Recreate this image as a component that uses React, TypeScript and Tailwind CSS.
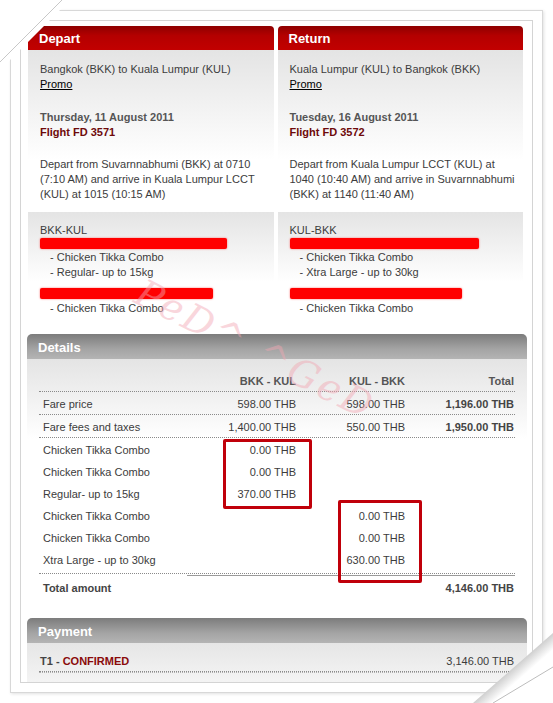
const font = "font-['Liberation_Sans',Arial,sans-serif]";

function Redact({ w, mt, h }: { w: string; mt: string; h: string }) {
  return <div className={`${w} ${mt} ${h} bg-[#ff0000] rounded-[2px] shadow-[0_0_2px_#ff6060]`} />;
}

function FlightColumn(props: {
  title: string;
  route: string;
  date: string;
  flight: string;
  lines: string[];
  code: string;
  bag: string;
  bar1: string;
  bar2: string;
}) {
  return (
    <div className="flex-1 flex flex-col">
      <div className="h-[24px] rounded-t-[4px] bg-[linear-gradient(to_bottom,#8e0000,#b40000_40%,#c20000)] px-[11px] pt-[2px] flex items-center">
        <span className="text-white font-bold text-[13px]">{props.title}</span>
      </div>
      <div className="bg-[linear-gradient(to_bottom,#e4e4e4,#ffffff_110px)] pl-[12px] pt-[12px] pb-[9px] text-[11px] leading-[15px] text-[#3c3c3c]">
        <div className="whitespace-nowrap">{props.route}</div>
        <div className="text-black underline">Promo</div>
        <div className="mt-[18px] font-bold text-[#555]">{props.date}</div>
        <div className="font-bold text-[#6e0a0a]">{props.flight}</div>
        <div className="mt-[17px] whitespace-nowrap">
          {props.lines.map((l) => (
            <div key={l}>{l}</div>
          ))}
        </div>
      </div>
      <div className="mt-[1px] bg-[linear-gradient(to_bottom,#e4e4e4,#ffffff_70px)] pl-[12px] pt-[11px] pb-[12px] text-[11px] leading-[15px] text-[#3c3c3c]">
        <div>{props.code}</div>
        <Redact w={props.bar1} mt="mt-[0px]" h="h-[11px]" />
        <div className="pl-[10px] mt-[1px]">- Chicken Tikka Combo</div>
        <div className="pl-[10px]">{props.bag}</div>
        <Redact w={props.bar2} mt="mt-[8px]" h="h-[11px]" />
        <div className="pl-[10px] mt-[2px]">- Chicken Tikka Combo</div>
      </div>
    </div>
  );
}

const rows: [string, string, string, string][] = [
  ["Chicken Tikka Combo", "0.00 THB", "", ""],
  ["Chicken Tikka Combo", "0.00 THB", "", ""],
  ["Regular- up to 15kg", "370.00 THB", "", ""],
  ["Chicken Tikka Combo", "", "0.00 THB", ""],
  ["Chicken Tikka Combo", "", "0.00 THB", ""],
  ["Xtra Large - up to 30kg", "", "630.00 THB", ""],
];

export default function App() {
  const grid = "grid grid-cols-[147px_110px_109px_110px] items-center pt-[2px]";
  return (
    <div className={`${font} relative w-[553px] h-[703px] bg-white overflow-hidden p-[10px]`}>
      {/* photo frame */}
      <div className="h-full border border-[#d8d8d8] shadow-[1px_1px_3px_rgba(0,0,0,0.12)] p-[9px]">
        <div className="h-full border border-[#d4d4d4] pl-[6px] pr-[5px] pt-[5px] overflow-hidden">
          {/* flights */}
          <div className="flex gap-[4px] pl-[1px] pr-[4px]">
            <FlightColumn
              title="Depart"
              route="Bangkok (BKK) to Kuala Lumpur (KUL)"
              date="Thursday, 11 August 2011"
              flight="Flight FD 3571"
              lines={[
                "Depart from Suvarnnabhumi (BKK) at 0710",
                "(7:10 AM) and arrive in Kuala Lumpur LCCT",
                "(KUL) at 1015 (10:15 AM)",
              ]}
              code="BKK-KUL"
              bag="- Regular- up to 15kg"
              bar1="w-[187px]"
              bar2="w-[173px]"
            />
            <FlightColumn
              title="Return"
              route="Kuala Lumpur (KUL) to Bangkok (BKK)"
              date="Tuesday, 16 August 2011"
              flight="Flight FD 3572"
              lines={[
                "Depart from Kuala Lumpur LCCT (KUL) at",
                "1040 (10:40 AM) and arrive in Suvarnnabhumi",
                "(BKK) at 1140 (11:40 AM)",
              ]}
              code="KUL-BKK"
              bag="- Xtra Large - up to 30kg"
              bar1="w-[189px]"
              bar2="w-[172px]"
            />
          </div>

          {/* details */}
          <div className="relative mt-[6px]">
            <div className="h-[25px] rounded-t-[5px] bg-[linear-gradient(to_bottom,#7c7c7c,#a4a4a4_60%,#b4b4b4)] px-[11px] pt-[2px] flex items-center">
              <span className="text-white font-bold text-[13px]">Details</span>
            </div>
            <div className="bg-[linear-gradient(to_bottom,#e4e4e4,#ffffff_80px)] px-[12px] pt-[10px] pb-[20px] text-[11px] text-[#3c3c3c]">
              <div className={`${grid} h-[23px] border-b border-dotted border-[#8a8a8a] font-bold text-[#555]`}>
                <span />
                <span className="text-right">BKK - KUL</span>
                <span className="text-right">KUL - BKK</span>
                <span className="text-right pr-[1px]">Total</span>
              </div>
              <div className={`${grid} h-[23px] border-b border-dotted border-[#8a8a8a]`}>
                <span className="pl-[4px]">Fare price</span>
                <span className="text-right">598.00 THB</span>
                <span className="text-right">598.00 THB</span>
                <span className="text-right pr-[1px] font-bold text-[#444]">1,196.00 THB</span>
              </div>
              <div className={`${grid} h-[23px] border-b border-dotted border-[#8a8a8a]`}>
                <span className="pl-[4px]">Fare fees and taxes</span>
                <span className="text-right">1,400.00 THB</span>
                <span className="text-right">550.00 THB</span>
                <span className="text-right pr-[1px] font-bold text-[#444]">1,950.00 THB</span>
              </div>
              {rows.map((r, i) => (
                <div key={i} className={`${grid} h-[22px]`}>
                  <span className="pl-[4px] whitespace-nowrap">{r[0]}</span>
                  <span className="text-right">{r[1]}</span>
                  <span className="text-right">{r[2]}</span>
                  <span className="text-right">{r[3]}</span>
                </div>
              ))}
              <div className="mt-[3px] border-t border-dotted border-[#8a8a8a]" />
              <div className="mt-[1px] ml-[148px] border-t border-[#9a9a9a]" />
              <div className={`${grid} h-[22px] font-bold text-[#444]`}>
                <span className="pl-[4px]">Total amount</span>
                <span />
                <span />
                <span className="text-right pr-[1px]">4,146.00 THB</span>
              </div>
            </div>
            {/* annotation boxes */}
            <div className="absolute left-[196px] top-[105px] w-[89px] h-[70px] border-[3px] border-[#c0000a] rounded-[2px]" />
            <div className="absolute left-[311px] top-[166px] w-[84px] h-[83px] border-[3px] border-[#c0000a] rounded-[2px]" />
          </div>

          {/* payment */}
          <div>
            <div className="h-[25px] rounded-t-[5px] bg-[linear-gradient(to_bottom,#7c7c7c,#a4a4a4_60%,#b4b4b4)] px-[11px] pt-[2px] flex items-center">
              <span className="text-white font-bold text-[13px]">Payment</span>
            </div>
            <div className="bg-[linear-gradient(to_bottom,#e6e6e6,#f4f4f4)] px-[12px] pt-[11px] h-[40px] text-[11px] leading-[15px]">
              <div className="flex justify-between pl-[1px]">
                <span className="font-bold text-[#444]">
                  T1 - <span className="text-[#8a0a0a]">CONFIRMED</span>
                </span>
                <span className="text-[#3c3c3c] pr-[1px]">3,146.00 THB</span>
              </div>
              <div className="mt-[2px] border-t border-dotted border-[#8a8a8a]" />
              <div className="border-t border-dotted border-[#b0b0b0]" />
            </div>
          </div>
        </div>
      </div>

      {/* watermark */}
      <div className="absolute left-[138px] top-[262px] rotate-[27deg] origin-left pointer-events-none text-[38px] italic text-[#f2a6b2] opacity-45 font-['DejaVu_Serif',serif] tracking-[3px] whitespace-nowrap">
        PeD^ ^GeD
      </div>

      {/* page-curl corners */}
      <svg className="absolute left-0 top-0" width="70" height="70" viewBox="0 0 70 70">
        <defs>
          <linearGradient id="tl" x1="0" y1="0" x2="1" y2="1">
            <stop offset="0.55" stopColor="#ffffff" />
            <stop offset="0.62" stopColor="#d6d6d6" />
            <stop offset="0.75" stopColor="#ffffff" stopOpacity="0" />
          </linearGradient>
        </defs>
        <polygon points="0,0 70,0 0,70" fill="url(#tl)" />
        <line x1="0" y1="62" x2="62" y2="0" stroke="#c8c8c8" strokeWidth="1" />
      </svg>
      <svg className="absolute right-0 bottom-0" width="80" height="70" viewBox="0 0 80 70">
        <defs>
          <linearGradient id="br" x1="0" y1="0" x2="1" y2="1">
            <stop offset="0.35" stopColor="#ffffff" stopOpacity="0" />
            <stop offset="0.5" stopColor="#cfcfcf" />
            <stop offset="0.62" stopColor="#ffffff" />
          </linearGradient>
        </defs>
        <polygon points="80,0 80,70 0,70" fill="url(#br)" />
        <polygon points="80,34 80,70 20,70" fill="#ffffff" />
        <line x1="80" y1="34" x2="20" y2="70" stroke="#bdbdbd" strokeWidth="1" />
      </svg>
    </div>
  );
}
